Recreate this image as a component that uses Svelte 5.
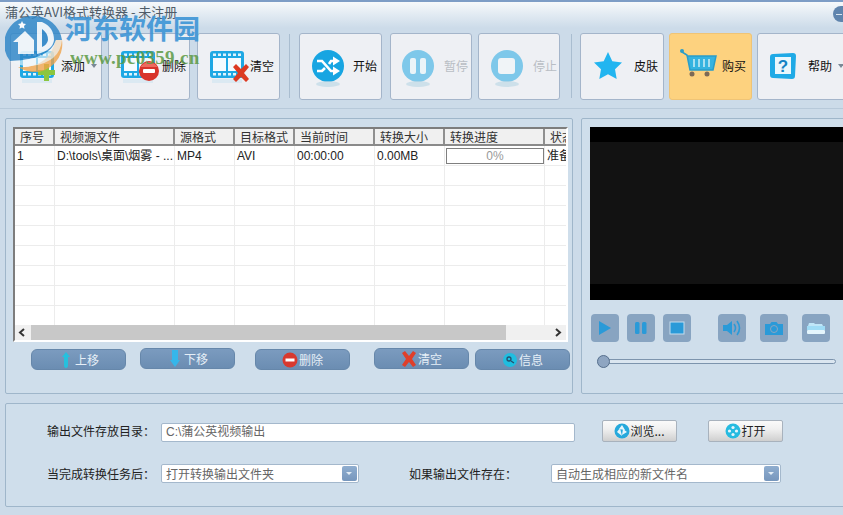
<script>
  const tools = [
    { label: '添加', icon: 'add', width: 92, pad: 4, gap: 2, ml: 0, arrow: true },
    { label: '删除', icon: 'del', width: 82, pad: 7, gap: 2, ml: 6 },
    { label: '清空', icon: 'clear', width: 83, pad: 7, gap: 1, ml: 7 },
    { sep: true, ml: 9 },
    { label: '开始', icon: 'start', width: 83, pad: 6, gap: 3, ml: 9 },
    { label: '暂停', icon: 'pause', width: 82, pad: 5, gap: 4, off: true, ml: 8 },
    { label: '停止', icon: 'stop', width: 82, pad: 6, gap: 4, off: true, ml: 6 },
    { sep: true, ml: 11 },
    { label: '皮肤', icon: 'star', width: 84, pad: 5, gap: 4, ml: 8 },
    { label: '购买', icon: 'cart', width: 83, pad: 6, gap: 2, hot: true, ml: 5 },
    { label: '帮助', icon: 'help', width: 92, pad: 3, gap: 3, ml: 5, arrow: true }
  ]

  const columns = [
    { title: '序号', width: 40 },
    { title: '视频源文件', width: 120 },
    { title: '源格式', width: 60 },
    { title: '目标格式', width: 60 },
    { title: '当前时间', width: 80 },
    { title: '转换大小', width: 70 },
    { title: '转换进度', width: 100 },
    { title: '状态', width: 23 }
  ]
  const row = ['1', 'D:\\tools\\桌面\\烟雾 - ...', 'MP4', 'AVI', '00:00:00', '0.00MB', '', '准备']
  const blanks = [1, 2, 3, 4, 5, 6, 7, 8]

  const actions = [
    { label: '上移', icon: 'up', cls: 'a1' },
    { label: '下移', icon: 'down', cls: 'a2' },
    { label: '删除', icon: 'minus', cls: 'a3' },
    { label: '清空', icon: 'x', cls: 'a4' },
    { label: '信息', icon: 'info', cls: 'a5' }
  ]
  const players = [
    { icon: 'play', cls: '' },
    { icon: 'hold', cls: '' },
    { icon: 'square', cls: 'wide' },
    { icon: 'volume', cls: '' },
    { icon: 'camera', cls: '' },
    { icon: 'folder', cls: '' }
  ]
</script>

{#snippet film()}
  <rect x="5" y="6" width="34" height="27" rx="3" fill="#1ea8e4" />
  <rect x="8" y="13" width="13" height="13" fill="#f4fbff" />
  <rect x="23" y="13" width="13" height="13" fill="#f4fbff" />
  {#each [8, 13, 18, 23, 28, 33] as x}
    <rect {x} y="8.5" width="3" height="2.5" fill="#dff3fc" />
    <rect {x} y="28" width="3" height="2.5" fill="#dff3fc" />
  {/each}
  <rect x="7" y="34" width="30" height="4" fill="#d3e6f1" opacity="0.7" />
{/snippet}

{#snippet shine(cx)}
  <ellipse cx={cx} cy="39" rx="12" ry="3" fill="#bfd8e6" opacity="0.7" />
{/snippet}

{#snippet toolIcon(name)}
  <svg width="44" height="44" viewBox="0 0 44 44">
    {#if name === 'add'}
      {@render film()}
      <path d="M29 19h5v6h6v5h-6v6h-5v-6h-6v-5h6z" fill="#8cc63f" />
    {:else if name === 'del'}
      {@render film()}
      <circle cx="33" cy="26" r="10" fill="#d8342b" />
      <path d="M24.500 22a10 10 0 0 1 17 0z" fill="#ee6a5e" />
      <rect x="27" y="24" width="12" height="4" rx="1" fill="#fff" />
    {:else if name === 'clear'}
      {@render film()}
      <path d="M28 22l3-3 5 5 5-5 3 3-5 6 5 6-3 3-5-5-5 5-3-3 5-6z" fill="#dc3a22" />
    {:else if name === 'start'}
      <circle cx="22" cy="21" r="16" fill="#17a5e2" />
      <path d="M11 16h5l9 10h3M11 26h5l3-3M23 19l2-3h3" fill="none" stroke="#fff" stroke-width="2.600" />
      <path d="M27 11.500l7 4.500-7 4.500zM27 21.500l7 4.500-7 4.500z" fill="#fff" />
      {@render shine(22)}
    {:else if name === 'pause'}
      <circle cx="22" cy="21" r="16" fill="#7ec8ea" />
      <rect x="14" y="13" width="6" height="16" rx="2" fill="#eaf4f8" />
      <rect x="24" y="13" width="6" height="16" rx="2" fill="#eaf4f8" />
      {@render shine(22)}
    {:else if name === 'stop'}
      <circle cx="22" cy="21" r="16" fill="#7ec8ea" />
      <rect x="13" y="13" width="17" height="16" rx="3" fill="#f0f4f7" />
      {@render shine(22)}
    {:else if name === 'star'}
      <path d="M22 7l4.300 9.200 9.700 1.300-7 6.800 1.700 9.700-8.700-4.800-8.700 4.800 1.700-9.700-7-6.800 9.700-1.300z" fill="#22b5f0" />
    {:else if name === 'cart'}
      <path d="M6 7l5 3 3 15h23l3-14H11" fill="#35b3e0" stroke="#2a9dc9" stroke-width="1.500" />
      <path d="M18 14v8M23 14v8M28 14v8M33 14v8" stroke="#a8dff0" stroke-width="2" />
      <circle cx="16" cy="29" r="2.500" fill="#7d6a55" />
      <circle cx="31" cy="29" r="2.500" fill="#7d6a55" />
      <circle cx="6" cy="6" r="2" fill="#2a9dc9" />
    {:else if name === 'help'}
      <path d="M12 9l20-1q3 0 3 3l-1 20q0 3-3 3l-19-1q-3 0-3-3v-18q0-3 3-3z" fill="#1faae6" />
      <rect x="14" y="12" width="16" height="17" fill="#e9f7fd" />
      <text x="22" y="27" class="mark">?</text>
    {/if}
  </svg>
{/snippet}

{#snippet smallIcon(name)}
  <svg width="16" height="18" viewBox="0 0 16 18">
    {#if name === 'up'}
      <path d="M8 1l4 5h-2v8q0 3-2 3t-2-3v-8h-2z" fill="#26c0de" />
    {:else if name === 'down'}
      <path d="M5 0h6v10h2l-5 7-5-7h2z" fill="#35b6ea" />
    {:else if name === 'minus'}
      <circle cx="8" cy="9" r="7.500" fill="#d8392f" />
      <rect x="3.500" y="7.500" width="9" height="3" fill="#fff" />
    {:else if name === 'x'}
      <path d="M1 3l3-2 4 5 4-5 3 2-4 6 4 6-3 2-4-5-4 5-3-2 4-6z" fill="#df3f2a" />
    {:else if name === 'info'}
      <circle cx="8" cy="9" r="7" fill="#20bde0" />
      <circle cx="7" cy="8" r="2" fill="none" stroke="#24506e" stroke-width="1.300" />
      <path d="M9 10l3 2" stroke="#24506e" stroke-width="1.300" />
    {:else if name === 'browse'}
      <circle cx="8" cy="9" r="7.500" fill="#26a9dc" />
      <path d="M8 3l3 5-6-1zM13 10l-5 3 1-6zM3 10l3-4 2 8z" fill="#e8f6fc" />
    {:else if name === 'open'}
      <circle cx="8" cy="9" r="7.500" fill="#26bbe0" />
      <circle cx="8" cy="5.500" r="1.600" fill="#e8f6fc" />
      <circle cx="8" cy="12.500" r="1.600" fill="#e8f6fc" />
      <circle cx="4.500" cy="9" r="1.600" fill="#e8f6fc" />
      <circle cx="11.500" cy="9" r="1.600" fill="#e8f6fc" />
    {/if}
  </svg>
{/snippet}

{#snippet playerIcon(name)}
  <svg width="20" height="20" viewBox="0 0 20 20" fill="#2a9ad8">
    {#if name === 'play'}
      <path d="M4 3l12 7-12 7z" />
    {:else if name === 'hold'}
      <rect x="4" y="4" width="4.500" height="12" rx="1.500" />
      <rect x="11" y="4" width="4.500" height="12" rx="1.500" />
    {:else if name === 'square'}
      <rect x="3" y="4" width="14" height="12" stroke="#c3dcee" stroke-width="1" />
    {:else if name === 'volume'}
      <path d="M1 7h4l5-4v14l-5-4h-4z" />
      <path d="M12 6q3 4 0 8M15 3q5 7 0 14" fill="none" stroke="#2a9ad8" stroke-width="1.600" />
    {:else if name === 'camera'}
      <path d="M1 6h5l1.500-2h5l1.500 2h5v11h-18z" />
      <circle cx="10" cy="11" r="3.500" fill="none" stroke="#8aa5c1" stroke-width="1" />
    {:else if name === 'folder'}
      <path d="M3 5h5l1 1h7l1 2h-15z" fill="#bfe6f8" />
      <rect x="1" y="8" width="18" height="4" fill="#9fdcf6" />
      <rect x="1" y="12" width="18" height="4" rx="1" fill="#e4f5fc" />
    {/if}
  </svg>
{/snippet}

<div class="window">
  <header class="toolbar">
    {#each tools as tool}
      {#if tool.sep}
        <span class="sep" style="margin-left: {tool.ml}px"></span>
      {:else}
        <div
          class="tool"
          class:off={tool.off}
          class:hot={tool.hot}
          style="width: {tool.width}px; margin-left: {tool.ml}px; padding-left: {tool.pad}px; gap: {tool.gap}px"
        >
          {@render toolIcon(tool.icon)}
          <span class="name">{tool.label}</span>
          {#if tool.arrow}<i class="caret"></i>{/if}
        </div>
      {/if}
    {/each}
  </header>

  <div class="title">蒲公英AVI格式转换器 - 未注册</div>
  <div class="minimize"><span></span></div>

  <!-- site watermark stamped over the screenshot -->
  <div class="watermark">
    <svg class="wm-logo" width="58" height="62" viewBox="0 0 58 62">
      <path d="M57 28a28 28 0 0 1-30 32q-8-1-14-5 30 2 38-27z" fill="#f0a248" opacity="0.85" />
      <path d="M29 4a28 28 0 0 1 28 24h-6q-6 20-46 21a28 28 0 0 1 24-45z" fill="#2f86c8" opacity="0.9" />
      <path d="M5 49q40-1 46-21h6q-2 22-30 26-12 1-22-5z" fill="#eef5fa" opacity="0.7" />
      <path d="M13 42v-12h-5l12-11 9 9v14z" fill="#eef5fa" />
      <path d="M32 10h5q12 5 12 18-1 10-17 14z" fill="#eef5fa" />
      <path d="M37 17q6 4 6 11-1 5-6 7z" fill="#2f86c8" />
      <path d="M17 9l1.200 2.500 2.800.4-2 2 .5 2.800-2.500-1.300-2.500 1.300.5-2.800-2-2 2.800-.4z" fill="#fff" />
    </svg>
    <div class="wm-name">河东软件园</div>
    <div class="wm-url">www.pc0359.cn</div>
  </div>

  <div class="main">
    <section class="panel left">
      <div class="table">
        <div class="head">
          {#each columns as col}
            <div class="th" style="width: {col.width}px">{col.title}</div>
          {/each}
        </div>
        <div class="tr">
          {#each columns as col, i}
            <div class="td" style="width: {col.width}px">
              {#if i === 6}
                <div class="progress">0%</div>
              {:else}
                {row[i]}
              {/if}
            </div>
          {/each}
        </div>
        {#each blanks as b (b)}
          <div class="tr">
            {#each columns as col}
              <div class="td" style="width: {col.width}px"></div>
            {/each}
          </div>
        {/each}
        <div class="scroll">
          <svg class="chev" width="16" height="15" viewBox="0 0 16 15">
            <path d="M9 4l-4 3.500 4 3.500" fill="none" stroke="#333" stroke-width="2" />
          </svg>
          <div class="thumb"></div>
          <svg class="chev" width="17" height="15" viewBox="0 0 17 15">
            <path d="M7 4l4 3.500-4 3.500" fill="none" stroke="#333" stroke-width="2" />
          </svg>
        </div>
      </div>

      <div class="actions">
        {#each actions as a}
          <div class="action {a.cls}">
            {@render smallIcon(a.icon)}
            <span>{a.label}</span>
          </div>
        {/each}
      </div>
    </section>

    <section class="panel right">
      <div class="video"><div class="frame"></div></div>
      <div class="controls">
        {#each players as p}
          <div class="pbtn {p.cls} {p.icon}">{@render playerIcon(p.icon)}</div>
        {/each}
      </div>
      <div class="slider"><span class="knob"></span></div>
    </section>
  </div>

  <section class="panel output">
    <div class="line first">
      <label class="l1" for="dir">输出文件存放目录：</label>
      <div class="field path" id="dir">C:\蒲公英视频输出</div>
      <div class="push browse">{@render smallIcon('browse')}<span>浏览...</span></div>
      <div class="push open">{@render smallIcon('open')}<span>打开</span></div>
    </div>
    <div class="line second">
      <span class="l1">当完成转换任务后：</span>
      <div class="field combo c1">打开转换输出文件夹<b class="drop"></b></div>
      <span class="l2">如果输出文件存在：</span>
      <div class="field combo c2">自动生成相应的新文件名<b class="drop"></b></div>
    </div>
  </section>
</div>

<style>
  :global(body) {
    margin: 0;
    background: #ccdbe9;
  }

  .window {
    position: relative;
    width: 843px;
    height: 515px;
    overflow: hidden;
    background: #ccdbe9;
    font-family: "Noto Sans CJK SC", "Liberation Sans", sans-serif;
    font-size: 12px;
    line-height: 16px;
    color: #222;
  }

  .toolbar {
    box-sizing: border-box;
    height: 109px;
    display: flex;
    align-items: flex-start;
    padding: 31px 0 0 10px;
    border-top: 2px solid #7d9dc6;
    background: linear-gradient(#f6f9fb 0, #ccdbe9 26px);
    border-bottom: 1px solid #b7c9da;
  }

  .sep {
    flex: none;
    width: 1px;
    height: 64px;
    margin-top: 1px;
    background: #a9bdd0;
  }

  .tool {
    flex: none;
    box-sizing: border-box;
    height: 67px;
    display: flex;
    align-items: center;
    border: 1px solid #a4b5ca;
    border-radius: 3px;
    background: #eef0f4;
    color: #111;
    position: relative;
  }

  .name {
    margin-bottom: 2px;
  }

  .tool.off {
    color: #b9bec4;
  }

  .tool.hot {
    background: #fdd27f;
    border-color: #efc476;
  }

  .caret {
    position: absolute;
    right: 4px;
    top: 30px;
    border: 3px solid transparent;
    border-top: 4px solid #7a8896;
  }

  .mark {
    font: bold 17px "Liberation Sans", sans-serif;
    text-anchor: middle;
    fill: #1484c4;
  }

  .title {
    position: absolute;
    left: 5px;
    top: 4px;
    font-size: 13px;
    color: #4f5c68;
    white-space: nowrap;
  }

  .minimize {
    position: absolute;
    left: 833px;
    top: 6px;
    width: 20px;
    height: 16px;
    border-radius: 8px;
    background: #5f84ad;
  }

  .minimize span {
    display: block;
    width: 6px;
    height: 1px;
    margin: 8px 0 0 3px;
    background: #d8e4ef;
  }

  .watermark {
    position: absolute;
    left: 5px;
    top: 12px;
    width: 200px;
    height: 62px;
    pointer-events: none;
  }

  .wm-logo {
    display: block;
    opacity: 0.92;
  }

  .wm-name {
    position: absolute;
    left: 60px;
    top: -1px;
    font: bold 27px/34px "Noto Sans CJK SC", sans-serif;
    color: #3d95d6;
    opacity: 0.9;
    white-space: nowrap;
  }

  .wm-url {
    position: absolute;
    left: 65px;
    top: 36px;
    font: bold 19px/20px "Liberation Serif", serif;
    letter-spacing: 0.3px;
    color: #5d9a45;
    opacity: 0.85;
    white-space: nowrap;
  }

  .main {
    display: flex;
    gap: 8px;
    margin: 9px 0 0 5px;
  }

  .panel {
    flex: none;
    box-sizing: border-box;
    background: #cfdeeb;
    border: 1px solid #9fb6ca;
    border-radius: 2px;
  }

  .left {
    width: 568px;
    height: 276px;
    padding: 8px 0 0 7px;
  }

  .table {
    box-sizing: border-box;
    width: 555px;
    height: 215px;
    background: #fff;
    border: 2px solid;
    border-color: #7d7d7d #fff #fff #7d7d7d;
    overflow: hidden;
  }

  .head,
  .tr {
    display: flex;
    width: 553px;
  }

  .head {
    height: 15px;
    background: #f0f0f0;
    border-bottom: 2px solid #8a8a8a;
  }

  .th {
    flex: none;
    box-sizing: border-box;
    padding-left: 5px;
    line-height: 15px;
    color: #333;
    border-right: 2px solid #8f8f8f;
    white-space: nowrap;
    overflow: hidden;
  }

  .tr {
    height: 20px;
    border-bottom: 1px solid #ececec;
    box-sizing: border-box;
  }

  .td {
    flex: none;
    box-sizing: border-box;
    padding: 1px 0 0 2px;
    line-height: 18px;
    font-family: "Liberation Sans", "Noto Sans CJK SC", sans-serif;
    color: #222;
    border-right: 1px solid #ececec;
    white-space: nowrap;
    overflow: hidden;
  }

  .progress {
    box-sizing: border-box;
    width: 98px;
    height: 16px;
    margin: 1px 0 0 -1px;
    border: 1px solid #7f7f7f;
    text-align: center;
    line-height: 14px;
    color: #999;
  }

  .scroll {
    display: flex;
    height: 15px;
    background: #f0f0f0;
    margin-top: -1px;
    position: relative;
  }

  .chev {
    flex: none;
  }

  .scroll .chev:last-child {
    margin-left: auto;
  }

  .thumb {
    width: 475px;
    background: #c8c8c8;
  }

  .actions {
    display: flex;
    align-items: flex-start;
    margin: 7px 0 0 18px;
  }

  .action {
    flex: none;
    box-sizing: border-box;
    width: 95px;
    height: 21px;
    display: flex;
    align-items: center;
    justify-content: center;
    border: 1px solid #6687aa;
    border-radius: 6px;
    background: linear-gradient(#7b9bbf, #6b8db2);
    color: #e6eff7;
    gap: 1px;
  }

  .a2 { margin: -1px 0 0 14px; }
  .a3 { margin-left: 20px; }
  .a4 { margin: -1px 0 0 24px; }
  .a5 { margin-left: 6px; }

  .right {
    width: 280px;
    height: 276px;
    padding: 8px 0 0 8px;
  }

  .video {
    width: 254px;
    height: 173px;
    padding-top: 15px;
    box-sizing: border-box;
    background: #000;
  }

  .frame {
    height: 142px;
    background: #121212;
  }

  .controls {
    display: flex;
    gap: 8px;
    margin: 14px 0 0 1px;
  }

  .pbtn {
    flex: none;
    width: 28px;
    height: 28px;
    display: flex;
    align-items: center;
    justify-content: center;
    border-radius: 4px;
    background: #88a4c1;
  }

  .volume { margin-left: 19px; }
  .camera,
  .folder { margin-left: 6px; }

  .slider {
    position: relative;
    box-sizing: border-box;
    width: 236px;
    height: 5px;
    margin: 17px 0 0 10px;
    border: 1px solid #7d94ad;
    border-radius: 3px;
    background: #dbe6f0;
  }

  .knob {
    position: absolute;
    left: -4px;
    top: -5px;
    box-sizing: border-box;
    width: 13px;
    height: 13px;
    border-radius: 50%;
    border: 1px solid #566f8d;
    background: #8ea5c1;
  }

  .output {
    width: 860px;
    height: 104px;
    margin: 9px 0 0 5px;
    padding: 16px 0 0 41px;
  }

  .line {
    display: flex;
  }

  .first {
    align-items: flex-end;
    height: 22px;
  }

  .second {
    align-items: center;
    height: 19px;
    margin-top: 22px;
  }

  .l1 {
    flex: none;
    width: 114px;
    align-self: center;
    color: #222;
  }

  .l2 {
    flex: none;
    width: 142px;
    margin-left: 50px;
  }

  .field {
    flex: none;
    box-sizing: border-box;
    position: relative;
    background: #fff;
    border: 1px solid #a4b8cc;
    border-radius: 2px;
    padding-left: 4px;
    color: #666;
    line-height: 17px;
  }

  .path {
    width: 414px;
    height: 19px;
    font-family: "Liberation Sans", "Noto Sans CJK SC", sans-serif;
  }

  .combo {
    height: 19px;
  }

  .c1 { width: 198px; }
  .c2 { width: 230px; }

  .drop {
    position: absolute;
    right: 1px;
    top: 1px;
    width: 15px;
    height: 15px;
    border-radius: 2px;
    background: linear-gradient(#8fadcf, #7797bd);
  }

  .drop::after {
    content: "";
    position: absolute;
    left: 4px;
    top: 6px;
    border: 3px solid transparent;
    border-top: 3px solid #e3edf6;
  }

  .push {
    flex: none;
    box-sizing: border-box;
    width: 75px;
    height: 22px;
    display: flex;
    align-items: center;
    justify-content: center;
    border: 1px solid #a8b2bd;
    border-radius: 2px;
    background: linear-gradient(#fafafa, #f0f0f0 40%, #cfcfcf);
    color: #222;
  }

  .browse { margin-left: 27px; }
  .open { margin-left: 31px; }
</style>
